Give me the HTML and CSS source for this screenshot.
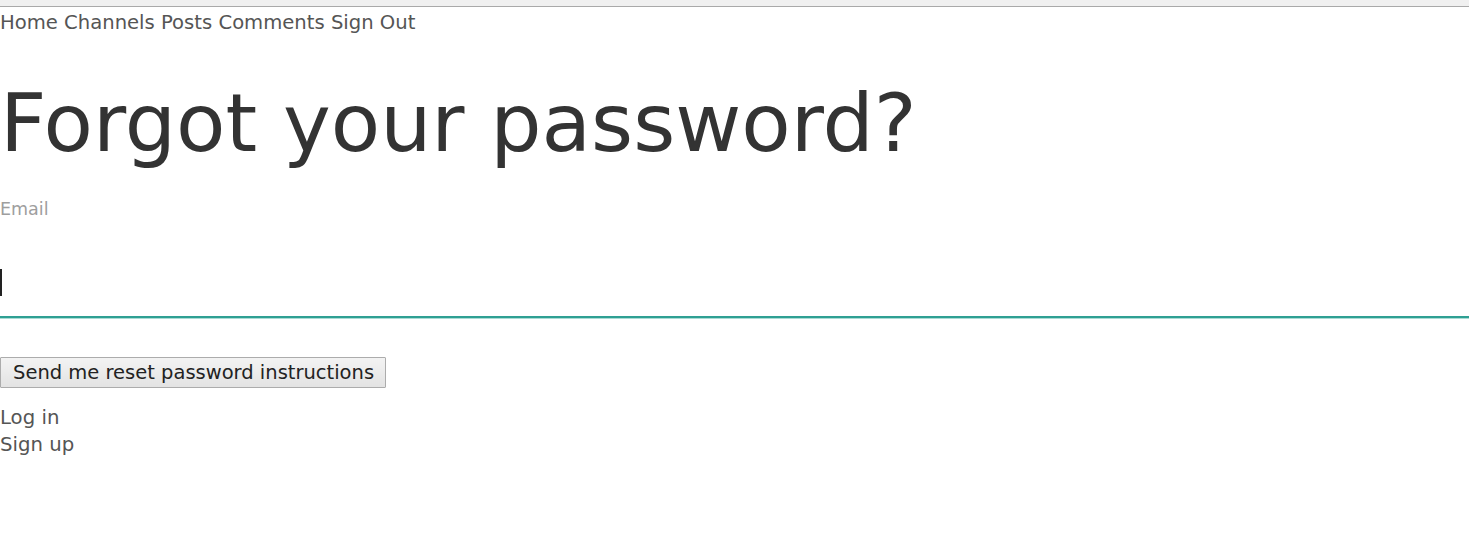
FILE: index.html
```html
<!DOCTYPE html>
<html lang="en">
<head>
<meta charset="utf-8">
<title>Forgot your password?</title>
<link rel="stylesheet" href="styles.css">
</head>
<body>
<div class="topbar"></div>
<nav class="nav">
  <a href="#">Home</a> <a href="#">Channels</a> <a href="#">Posts</a> <a href="#">Comments</a> <a href="#">Sign Out</a>
</nav>
<h1 class="title">Forgot your password?</h1>
<form class="form">
  <label class="label" for="email">Email</label>
  <div class="field">
    <input class="input" id="email" type="email">
    <span class="caret"></span>
  </div>
  <button class="btn" type="button">Send me reset password instructions</button>
</form>
<div class="links">
  <a href="#">Log in</a><br>
  <a href="#">Sign up</a>
</div>
</body>
</html>
```
FILE: styles.css
```css
html, body {
  margin: 0;
  padding: 0;
  background: #fff;
}
body {
  font-family: "DejaVu Sans", Verdana, sans-serif;
  color: #555;
}
a {
  color: #555;
  text-decoration: none;
}
.topbar {
  height: 6px;
  background: #f0f0f0;
  border-bottom: 1px solid #a9a9a9;
}
.nav {
  padding-top: 1px;
  font-size: 19.6px;
  line-height: 30px;
}
.title {
  margin: 39px 0 0;
  font-size: 80.8px;
  font-weight: normal;
  line-height: 93px;
  color: #333;
}
.form {
  margin: 0;
}
.label {
  display: block;
  margin-top: 29px;
  font-size: 17.5px;
  line-height: 20px;
  color: #9e9e9e;
}
.field {
  position: relative;
  margin-top: 37px;
}
.input {
  display: block;
  box-sizing: content-box;
  width: 100%;
  height: 60px;
  margin: 0;
  padding: 0;
  border: none;
  border-bottom: 2px solid #2fa093;
  box-shadow: 0 1px 0 0 #a9dcd5;
  outline: none;
  background: transparent;
  font-family: inherit;
  font-size: 20px;
}
.caret {
  position: absolute;
  left: 0;
  top: 13px;
  width: 2px;
  height: 27px;
  background: #222;
}
.btn {
  display: block;
  margin: 39px 0 0;
  height: 31px;
  padding: 0 11px 0 12px;
  border: 1px solid #acacac;
  border-radius: 1px;
  background: linear-gradient(#f3f3f3, #e3e3e3);
  font-family: inherit;
  font-size: 19.5px;
  line-height: 27px;
  color: #222;
}
.links {
  margin-top: 16px;
  font-size: 19.7px;
  line-height: 27px;
}
```
